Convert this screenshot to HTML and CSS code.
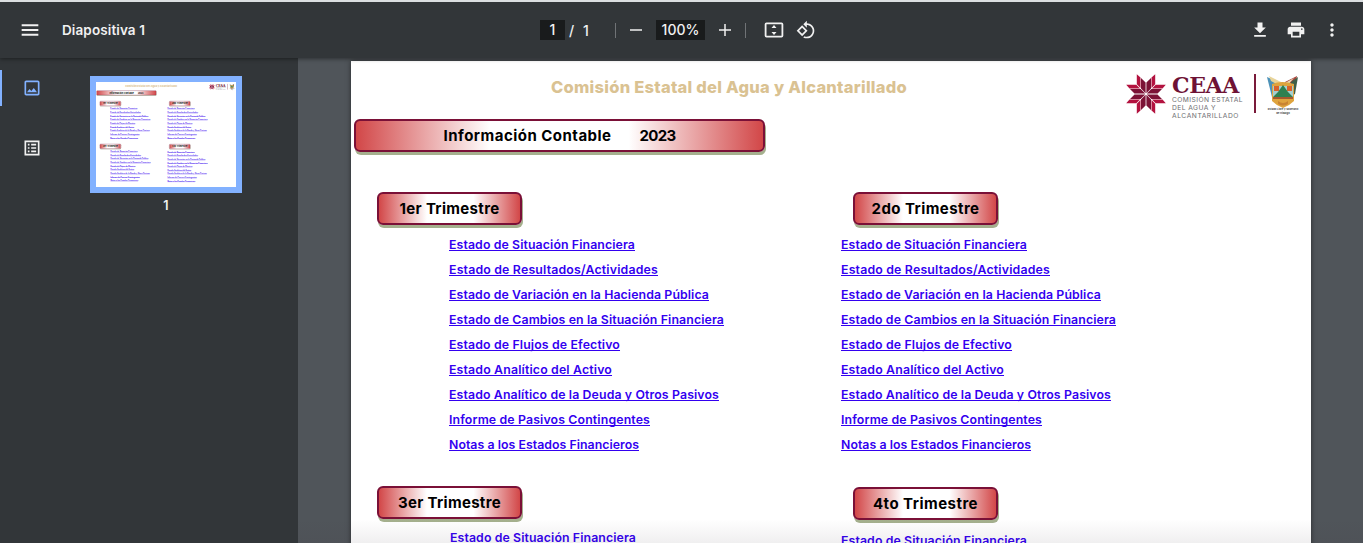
FILE: index.html
```html
<!DOCTYPE html>
<html lang="es">
<head>
<meta charset="utf-8">
<title>Diapositiva 1</title>
<link rel="stylesheet" href="styles.css">
</head>
<body>
<header class="toolbar">
  <div class="bar-left">
    <svg class="ico" viewBox="0 0 24 24"><path d="M2 19h20v-2.400H2zm0-5.800h20v-2.400H2zM2 5v2.400h20V5z"/></svg>
    <span class="doc-title" data-w="83">Diapositiva 1</span>
  </div>
  <div class="bar-mid">
    <span class="field page-no">1</span><span class="slash">/</span><span class="total">1</span>
    <i class="sep"></i>
    <svg class="ico minus" viewBox="0 0 24 24"><path d="M20 13H4v-2h16z"/></svg>
    <span class="field zoom">100%</span>
    <svg class="ico plus" viewBox="0 0 24 24"><path d="M20 13h-7v7h-2v-7H4v-2h7V4h2v7h7z"/></svg>
    <i class="sep second"></i>
    <svg class="ico fit-ico" viewBox="0 0 20 20"><path fill-rule="evenodd" d="M2.5 2.500h15a1.800 1.800 0 0 1 1.800 1.800v11.400a1.800 1.800 0 0 1-1.800 1.800h-15a1.800 1.800 0 0 1-1.800-1.800V4.300a1.800 1.800 0 0 1 1.800-1.800zm0 1.700v11.600h15V4.200zM10 5l2.500 3h-5zm0 10l-2.500-3h5z"/></svg>
    <svg class="ico rot" viewBox="0 0 24 24"><path d="M7.340 6.410L.86 12.900l6.490 6.480 6.490-6.480-6.500-6.490zM3.690 12.900l3.660-3.660L11 12.900l-3.660 3.660-3.650-3.660zm15.670-6.260C17.610 4.880 15.300 4 13 4V.760L8.760 5 13 9.240V6c1.790 0 3.580.680 4.950 2.050 2.730 2.730 2.730 7.170 0 9.900C16.580 19.320 14.790 20 13 20c-.97 0-1.940-.210-2.840-.610l-1.490 1.490C10.020 21.620 11.510 22 13 22c2.300 0 4.610-.880 6.360-2.640 3.520-3.510 3.520-9.210 0-12.720z"/></svg>
  </div>
  <div class="bar-right">
    <svg class="ico" viewBox="0 0 24 24"><path d="M19 9h-4V3H9v6H5l7 7 7-7zM5 18v2h14v-2H5z"/></svg>
    <svg class="ico" viewBox="0 0 24 24"><path d="M19 8H5c-1.660 0-3 1.340-3 3v6h4v4h12v-4h4v-6c0-1.660-1.340-3-3-3zm-3 11H8v-5h8v5zm3-7c-.55 0-1-.45-1-1s.45-1 1-1 1 .45 1 1-.45 1-1 1zm-1-9H6v4h12V3z"/></svg>
    <svg class="ico" viewBox="0 0 24 24"><path d="M12 8c1.100 0 2-.9 2-2s-.9-2-2-2-2 .9-2 2 .9 2 2 2zm0 2c-1.100 0-2 .9-2 2s.9 2 2 2 2-.9 2-2-.9-2-2-2zm0 6c-1.100 0-2 .9-2 2s.9 2 2 2 2-.9 2-2-.9-2-2-2z"/></svg>
  </div>
</header>
<div class="viewer">
  <aside class="sidebar">
    <nav class="tabs">
      <div class="tab active"><svg class="ico" viewBox="0 0 24 24"><path d="M19 5v14H5V5h14m0-2H5c-1.100 0-2 .9-2 2v14c0 1.100.9 2 2 2h14c1.100 0 2-.9 2-2V5c0-1.100-.9-2-2-2zm-4.860 8.860l-3 3.870L9 13.140 6 17h12l-3.860-5.140z"/></svg></div>
      <div class="tab"><svg class="ico" viewBox="0 0 24 24"><path d="M3 3h18v18H3zm2 2v14h14V5zM7 7h2v2H7zm0 4h2v2H7zm0 4h2v2H7zM11 7h6v2h-6zm0 4h6v2h-6zm0 4h6v2h-6z" fill-rule="evenodd"/></svg></div>
    </nav>
    <div class="thumbs">
      <div class="thumb"></div>
      <span class="thumb-no">1</span>
    </div>
  </aside>
  <main class="stage">
    <article class="page">
      <div class="page-head">
        <h1 data-w="356">Comisión Estatal del Agua y Alcantarillado</h1>
        <div class="brand">
          <svg class="star" viewBox="-20 -20 40 40">
            <defs>
              <g id="petals">
                <path fill="#7c1236" d="M.4-.8V-11.500L5-16V-5.400zM-.4-.8V-11.500L-5-16V-5.400z"/>
                <path fill="#b3123f" d="M5.500-6V-16.500L9.200-19.800V-9.700zM-5.500-6V-16.500L-9.200-19.800V-9.700z"/>
              </g>
            </defs>
            <use href="#petals"/><use href="#petals" transform="rotate(90)"/><use href="#petals" transform="rotate(180)"/><use href="#petals" transform="rotate(270)"/>
          </svg>
          <div class="brand-text"><b data-w="67">CEAA</b><span data-w="71">COMISIÓN ESTATAL</span><span data-w="44">DEL AGUA Y</span><span data-w="67">ALCANTARILLADO</span></div>
          <i class="brand-line"></i>
          <div class="crest">
            <svg viewBox="0 0 34 33"><path fill="#4d92b8" d="M1 2l11 5 3 10-9 5z"/><path fill="#e8d49a" d="M3 1l12 6-1 4L5 6z"/><path fill="#a9483f" d="M31 1L19 7l-1 10 9 4z"/><path fill="#3f5f48" d="M32 2l-7 5-1 15 5-3z"/><path fill="#eadfbb" d="M28 3l-9 5v5z"/><path fill="#dfa43e" d="M6 9q10-4 22 0v17q-5 5-11 7-6-2-11-7z"/><path fill="#a5cfd0" d="M7 11h20v11H7z"/><path fill="#2f8050" d="M7 22l5-5 5-7 5 7 5 5z"/><path fill="#d9622b" d="M8 11h5v5H8zm13 0h5v5h-5z"/><path fill="#a7592d" d="M7 22h20v2H7z"/><path fill="#c98432" d="M12 26q5 4 10 0v3q-5 3-10 0z"/></svg>
            <small>Estado Libre y Soberano</small><small>de Hidalgo</small>
          </div>
        </div>
      </div>
      <h2 class="pill wide"><span data-w="168">Información Contable</span><span data-w="36">2023</span></h2>
      <div class="quarters">
        <section><h3 class="pill"><span data-w="100">1er Trimestre</span></h3><ul class="links"></ul></section>
        <section class="right"><h3 class="pill"><span data-w="108">2do Trimestre</span></h3><ul class="links"></ul></section>
        <section class="lower"><h3 class="pill"><span data-w="103">3er Trimestre</span></h3><ul class="links"></ul></section>
        <section class="right lower fourth"><h3 class="pill"><span data-w="105">4to Trimestre</span></h3><ul class="links"></ul></section>
      </div>
    </article>
  </main>
</div>
<script src="app.js"></script>
</body>
</html>
```
FILE: styles.css
```css
* { box-sizing: border-box; }
body { margin: 0; height: 543px; overflow: hidden; background: #50555a; font-family: Inter, "Liberation Sans", sans-serif; color: #f1f1f1; }
h1, h2, h3, ul { margin: 0; padding: 0; }
.toolbar { position: relative; z-index: 2; height: 58px; border-top: 2px solid #dcdfe1; background: #323639; box-shadow: 0 1px 4px rgba(0,0,0,.45); display: grid; grid-template-columns: 540px 1fr auto; align-items: center; font-size: 14px; font-weight: 500; }
.ico { display: block; width: 20px; height: 20px; fill: #f1f1f1; flex: none; }
.bar-left { display: flex; align-items: center; padding-left: 20px; gap: 22px; }
.doc-title { font-weight: 600; font-size: 13.5px; white-space: nowrap; }
.bar-mid { display: flex; align-items: center; }
.field { background: #191b1c; height: 20px; line-height: 20px; text-align: center; }
.page-no { width: 25px; }
.slash { margin-left: 4px; width: 7px; }
.total { margin-left: 7px; width: 8px; }
.sep { width: 1px; height: 15px; background: #707376; margin-left: 24px; }
.sep.second { margin-left: 11px; }
.minus { width: 18px; margin-left: 11px; }
.zoom { width: 49px; margin-left: 11px; }
.plus { width: 18px; margin-left: 11px; }
.fit-ico { margin-left: 18px; }
.rot { margin-left: 12px; }
.bar-right { display: flex; gap: 16px; padding-right: 21px; }
.viewer { display: flex; height: 485px; }
.sidebar { width: 298px; background: #323639; display: flex; flex: none; }
.tabs { width: 64px; display: flex; flex-direction: column; gap: 24px; padding-top: 12px; }
.tab { height: 36px; display: flex; align-items: center; justify-content: center; }
.tab.active { box-shadow: inset 2px 0 #82b1ff; }
.tab.active .ico { fill: #82b1ff; }
.thumbs { padding: 18px 0 0 26px; display: flex; flex-direction: column; align-items: center; gap: 5px; }
.thumb { width: 152px; height: 117px; border: 6px solid #82b1ff; background: #fff; overflow: hidden; }
.thumb .page { transform: scale(.14583); transform-origin: 0 0; box-shadow: none; }
.thumb-no { font-size: 12.5px; font-weight: 600; line-height: 16px; }
.stage { position: relative; flex: 1; padding: 3px 52px 0 53px; overflow: hidden; }
.stage::after { content: ""; position: absolute; left: 0; right: 0; bottom: 0; height: 24px; background: linear-gradient(transparent, rgba(60,50,60,.08)); }
.page { width: 960px; height: 720px; background: #fff; color: #000; box-shadow: 0 0 5px rgba(0,0,0,.5); }
.page-head { height: 58px; display: flex; justify-content: space-between; padding: 13px 11px 0 200px; }
h1 { font-size: 16.5px; font-weight: 800; line-height: 26px; color: #dac292; white-space: nowrap; }
.brand { display: flex; align-items: flex-start; }
.star { width: 40px; height: 40px; }
.brand-text { width: 73px; margin-left: 6px; display: flex; flex-direction: column; align-items: flex-start; white-space: nowrap; color: #6b6d70; font: 6.700px/7.800px Inter, sans-serif; }
.brand-text b { font: bold 22px/22px "DejaVu Serif", serif; color: #6e1235; margin-bottom: 1px; }
.brand-line { width: 2px; height: 39px; background: #7a1a3a; margin-left: 9px; }
.crest { margin: 1px 0 0 10px; width: 34px; display: flex; flex-direction: column; align-items: center; }
.crest svg { width: 34px; height: 33px; }
.crest small { font: bold 2.600px/3.500px Inter, sans-serif; color: #444; white-space: nowrap; }
.pill { width: 145px; height: 33px; margin-bottom: 1px; padding-bottom: 1px; border: 2px solid #7a1037; border-radius: 6px; background: linear-gradient(90deg, #d24748, #fff 34%, #fff 67%, #d24748); box-shadow: 1px 3px 0 #a5b08e; display: flex; align-items: center; justify-content: center; font-size: 15px; font-weight: 700; white-space: nowrap; }
.pill.wide { width: 411px; margin-left: 3px; gap: 28px; background: linear-gradient(90deg, #d24748, #fff 33%, #fff 67%, #d24748); }
.quarters { display: grid; grid-template-columns: 476px 1fr; grid-template-rows: 294px auto; padding: 39px 0 0 26px; }
.links { list-style: none; margin: 8px 0 0 72px; }
.right .links { margin-left: -12px; }
.lower .links { margin-left: 73px; margin-top: 7px; }
.right.lower .links { margin-left: -12px; }
.fourth { padding-top: 1px; }
.right.fourth .links { margin-top: 9px; }
.links li { height: 25px; line-height: 23px; font-size: 12.300px; }
.links a { color: #3300f0; font-weight: 600; white-space: nowrap; text-decoration: underline; text-decoration-thickness: 1px; text-underline-offset: 1px; text-decoration-skip-ink: none; }
```
FILE: app.js
```js
// Report titles with their set width in pixels.
const reports = [
  ['Estado de Situación Financiera', 186],
  ['Estado de Resultados/Actividades', 209],
  ['Estado de Variación en la Hacienda Pública', 260],
  ['Estado de Cambios en la Situación Financiera', 275],
  ['Estado de Flujos de Efectivo', 171],
  ['Estado Analítico del Activo', 163],
  ['Estado Analítico de la Deuda y Otros Pasivos', 270],
  ['Informe de Pasivos Contingentes', 201],
  ['Notas a los Estados Financieros', 190]
];
document.querySelectorAll('.links').forEach(list => {
  reports.forEach(([name, width]) => {
    const li = document.createElement('li');
    const a = document.createElement('a');
    a.href = '#';
    a.textContent = name;
    a.dataset.w = width;
    li.append(a);
    list.append(li);
  });
});
// Track each line out to its set width.
document.querySelectorAll('[data-w]').forEach(el => {
  const gap = (el.dataset.w - el.getBoundingClientRect().width) / el.textContent.length;
  el.style.letterSpacing = gap.toFixed(3) + 'px';
});
// The thumbnail is a reduced copy of the page.
document.querySelector('.thumb').append(document.querySelector('.page').cloneNode(true));
```
